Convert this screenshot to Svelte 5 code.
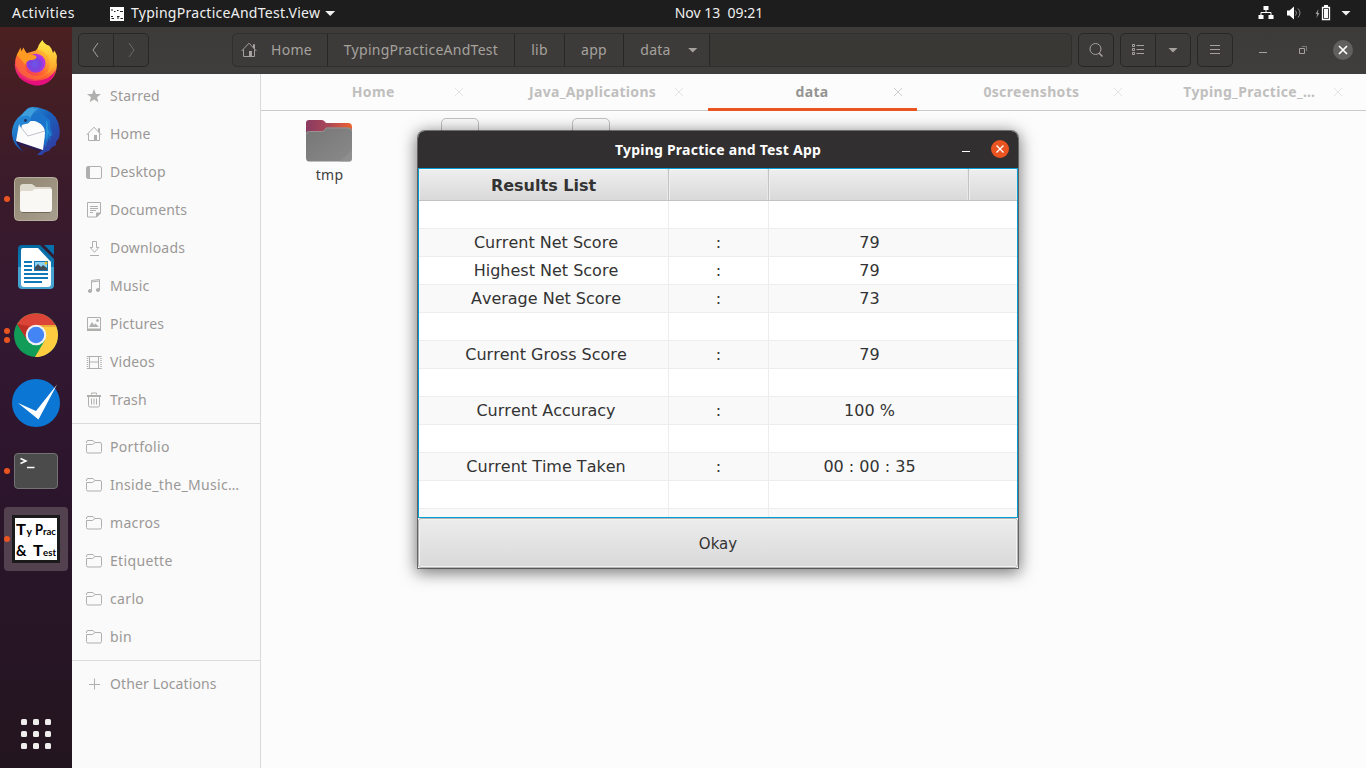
<script>
  const places = [
    { icon: 'star', label: 'Starred' },
    { icon: 'home', label: 'Home' },
    { icon: 'desktop', label: 'Desktop' },
    { icon: 'doc', label: 'Documents' },
    { icon: 'down', label: 'Downloads' },
    { icon: 'music', label: 'Music' },
    { icon: 'picture', label: 'Pictures' },
    { icon: 'video', label: 'Videos' },
    { icon: 'trash', label: 'Trash' }
  ];
  const bookmarks = ['Portfolio', 'Inside_the_Music…', 'macros', 'Etiquette', 'carlo', 'bin'];
  const tabs = ['Home', 'Java_Applications', 'data', '0screenshots', 'Typing_Practice_…'];
  const rows = [
    null,
    ['Current Net Score', '79'],
    ['Highest Net Score', '79'],
    ['Average Net Score', '73'],
    null,
    ['Current Gross Score', '79'],
    null,
    ['Current Accuracy', '100 %'],
    null,
    ['Current Time Taken', '00 : 00 : 35'],
    null,
    null
  ];
  const dock = [
    { id: 'firefox', dots: 0 },
    { id: 'thunderbird', dots: 0 },
    { id: 'files', dots: 1 },
    { id: 'writer', dots: 0 },
    { id: 'chrome', dots: 2 },
    { id: 'todo', dots: 0 },
    { id: 'terminal', dots: 1 },
    { id: 'typing', dots: 1, active: true }
  ];
</script>

{#snippet homeShape()}
  <path d="M.6 9 8 1.200 15.400 9M12.500 6V2.500h1V7M2.500 7.500v7h11v-7" fill="none" stroke="currentColor" />
  <path d="M8 9h3v5.500H8z" fill="currentColor" stroke="none" />
{/snippet}

{#snippet place(name)}
  <svg class="pi" viewBox="0 0 16 16" fill="none" stroke="currentColor">
    {#if name === 'star'}
      <path fill="currentColor" stroke="none" d="M8 1l1.900 4.900 5.100.1-4 3.300 1.400 5L8 11.500l-4.400 2.800 1.400-5L1 6l5.100-.1z" />
    {:else if name === 'home'}
      {@render homeShape()}
    {:else if name === 'desktop'}
      <rect x=".5" y="2.500" width="15" height="12" rx="1.500" /><path fill="currentColor" stroke="none" d="M1 3h3v11H1z" />
    {:else if name === 'doc'}
      <path d="M1.500.5h13v10.500l-4 4h-9zM4 4.500h8M4 6.500h8M4 8.500h6M4 10.500h3" /><path fill="currentColor" d="M10.500 15v-4h4z" />
    {:else if name === 'down'}
      <path d="M6.500 1.500h4v6h2.300L8.500 12.300 4.200 7.500h2.300zM4 15.500h9" />
    {:else if name === 'music'}
      <path d="M5.500 13V2.500l8-1V12M5.500 4l8-1" /><ellipse cx="4" cy="13" rx="1.600" ry="1.500" fill="currentColor" /><ellipse cx="12" cy="12" rx="1.600" ry="1.500" fill="currentColor" />
    {:else if name === 'picture'}
      <path d="M1.500 1.500h13v12.500h-13z" /><path fill="currentColor" stroke="none" d="M3 11l3-5 2 3 1.500-1.500L13 11zM1 12.500h14V15H1z" /><circle cx="11.500" cy="4.500" r="1" fill="currentColor" />
    {:else if name === 'video'}
      <path d="M3.500 2v12M12.500 2v12M3.500 8h9M1 2.500h14M1 14.500h14" /><path d="M1.500 2v13M15 2v13" stroke-dasharray="1 1" stroke-width="1.500" />
    {:else if name === 'trash'}
      <path d="M5.500 2.500v-1.500h5v1.500M2.500 5v8.500q0 1.500 1.500 1.500h8q1.500 0 1.500-1.500V5M5.500 6.500v6M8 6.500v6M10.500 6.500v6" /><path d="M1 4h14" stroke-width="2" />
    {:else if name === 'folder'}
      <path d="M.5 4V3Q.5 1.500 2 1.500h5L9 3.500h5q1.500 0 1.500 1.500v7.500q0 1.500-1.500 1.500H2Q.5 14 .5 12.500V5.500h6L9 3.500" />
    {:else}
      <path d="M8.500 2.500v11M3 8.500h11" />
    {/if}
  </svg>
{/snippet}

{#snippet dockIcon(id)}
  <svg class="di" viewBox="0 0 48 48">
    {#if id === 'firefox'}
      <defs>
        <linearGradient id="fx" x1="1" y1="0" x2=".2" y2="1"><stop offset="0" stop-color="#fff44f" /><stop offset=".35" stop-color="#ffb02e" /><stop offset=".65" stop-color="#ff5a36" /><stop offset="1" stop-color="#e31587" /></linearGradient>
        <linearGradient id="fy" x1=".6" y1="0" x2=".5" y2="1"><stop offset="0" stop-color="#fff14a" /><stop offset="1" stop-color="#ff9424" /></linearGradient>
        <radialGradient id="fp" cx=".45" cy=".55"><stop offset="0" stop-color="#6b57ea" /><stop offset=".6" stop-color="#7a42dc" /><stop offset="1" stop-color="#b833e1" /></radialGradient>
      </defs>
      <g transform="translate(.8 0) scale(.96 .95)">
        <path fill="url(#fx)" d="M4 18l4-7 1 3 2-4 3 5 10-3 7-10q3 9 8 11l4 4q3 5 3 10-1 20-21 21Q4 47 2 28q0-6 2-10z" />
        <path fill="url(#fy)" d="M31 1q-5 5-5 10 9 2 12 10 2 11-5 17 13-6 13-20-1-4-3-6l-1 3q-1-5-4-8-6-2-7-6z" />
        <circle cx="24" cy="25.500" r="10" fill="url(#fp)" />
        <path fill="#ff7a2a" d="M3 20l2-5 10 7-1 4-1 4q1 8 12 9 8-1 12-8 0 11-14 12Q8 41 3 28z" opacity=".6" />
        <path fill="#ff9b22" d="M4 17l4-8 1 4 2-4q2 5 5 7 7 0 9 3-2 4-7 3-4 1-5 5-6-8-9-10z" />
        <path fill="#e50e7d" d="M4 34q7 12 21 10 14-1 20-12-4 17-22 17Q9 46 4 34z" />
      </g>
    {:else if id === 'thunderbird'}
      <defs><linearGradient id="tb" x1="0" y1="0" x2="1" y2="1"><stop offset="0" stop-color="#34a7e6" /><stop offset=".45" stop-color="#1963bd" /><stop offset="1" stop-color="#36309a" /></linearGradient></defs>
      <path fill="url(#tb)" d="M16 1q6-2 12 0 14 3 18 14 3 9 1 16l-3 4 0 3-5 3-2 3-4 1-3 3q-2 1-5 0l5-5L6 36q1 4 6 9Q-1 38 0 24 1 14 10 7z" />
      <path fill="#291b52" d="M3 33l3 5q2 4 6 7-4-5-4-7l20 6 3-1z" />
      <path fill="#fcfcfd" d="M7 17 4 34l27 9 1-8 3-6-2-11-3-4-11 0z" /><path d="M7 18l9 11 17-5" fill="none" stroke="#aeb2ba" stroke-width=".8" />
      <path fill="#3e9fdc" d="M9 11q2-7 9-10l4-1-1 2 6-1q-8 5-9 12l-5 3z" />
      <path fill="#2487d5" d="M9 10q8-4 10 2-1 5-6 5l-3 1q-1 2 0 3-3-2-3-6z" /><circle cx="13.500" cy="13.500" r="1.400" fill="#20305a" />
      <path fill="#1c73cc" d="M18 13Q21 5 30 7l8 6q0 10 3 15l-3-1q0 6 1 7l-4-4-1 10q-2-2-2-5 1-6 1-10-1-10-15-12z" />
      <path fill="#2696d9" d="M34 13q2 1 2 9 2 6 4 7-3 1-4-4-1 8 0 11-3-5-2-13z" />
    {:else if id === 'files'}
      <defs><linearGradient id="fi" x1="0" y1="0" x2="1" y2="1"><stop stop-color="#8f8570" /><stop offset="1" stop-color="#a99f8e" /></linearGradient></defs>
      <rect x="2.500" y="2.500" width="43" height="43" rx="4" fill="url(#fi)" stroke="#b6ae9c" />
      <path fill="#dedacd" d="M8 12q0-3 3-3h9l4 3h13q3 0 3 3v10H8z" /><path fill="#f9f8f5" d="M8 18q0-2 2-2h10l3-2h15q2 0 2 2v18q0 3-3 3H11q-3 0-3-3z" /><path d="M10 37.500h28" stroke="#70685a" />
    {:else if id === 'writer'}
      <defs><linearGradient id="wr" x2="0" y2="1"><stop stop-color="#0369a3" /><stop offset=".5" stop-color="#1279b5" /><stop offset=".51" stop-color="#45a3d2" /></linearGradient></defs>
      <g transform="translate(0 1)">
        <path d="M10 1h18l14 14v26q0 4-4 4H10q-4 0-4-4V5q0-4 4-4z" fill="url(#wr)" /><path d="M11 4h15l13 14v22q0 3-3 3H12q-3 0-3-3V6q0-2 2-2z" fill="#fff" /><path d="M32 1h10v10z" fill="#0671ad" />
        <path d="M12 18h8M12 22h8M12 26h8M12 30h24M12 34h24M12 38h18" stroke="#1279b8" stroke-width="2" /><path fill="#1279b8" d="M22 17h14v10H22z" /><path fill="#8ad1f3" d="M23 18h12v8H23z" /><path fill="#424d59" d="M23 26v-3l3-3 3 3 2-2 4 3v2z" /><circle cx="34" cy="19" r="1.500" fill="#efbd28" />
      </g>
    {:else if id === 'chrome'}
      <circle cx="24" cy="24" r="22" fill="#119d58" />
      <path d="M24 24 5 13A22 22 0 0 1 43.500 14z" fill="#dc4437" /><path d="M24 14h19.600A22 22 0 0 1 23 46l10-17z" fill="#ffcd40" /><path d="M5 13l10 16-1-6 3-8z" fill="#be3025" /><path d="M24 14h19.500l.6 2L30 16z" fill="#eda83b" />
      <circle cx="24" cy="24" r="10.300" fill="#f2f2f2" /><circle cx="24" cy="24" r="8.200" fill="#4385f5" />
    {:else if id === 'todo'}
      <circle cx="24" cy="24" r="24" fill="#0c76d4" /><path fill="#fff" d="M6 24 24 32 45 5.500 26.500 40.500z" />
    {:else if id === 'terminal'}
      <rect x="2.500" y="6.500" width="43" height="35" rx="3.500" fill="#4b4b4b" stroke="#737373" /><path d="M8.500 11.500l5.500 2.500-5.500 2.500M15 20.500h7.500" fill="none" stroke="#fff" stroke-width="1.500" />
    {:else}
      <path fill="#1b1b1b" d="M0 0h48v48H0z" /><path fill="#fff" d="M3 3h42v42H3z" />
      <g class="hand">
        <text x="4" y="19.500" font-size="16" textLength="10" lengthAdjust="spacingAndGlyphs">T</text><text x="14.500" y="19.500" font-size="10" textLength="5.500" lengthAdjust="spacingAndGlyphs">y</text>
        <text x="23" y="19.500" font-size="16" textLength="8" lengthAdjust="spacingAndGlyphs">P</text><text x="31" y="19.500" font-size="9.500" textLength="13" lengthAdjust="spacingAndGlyphs">rac</text>
        <text x="4" y="40.500" font-size="16" textLength="10.500" lengthAdjust="spacingAndGlyphs">&amp;</text><text x="21" y="40.500" font-size="16" textLength="10" lengthAdjust="spacingAndGlyphs">T</text><text x="31" y="40.500" font-size="9.500" textLength="13" lengthAdjust="spacingAndGlyphs">est</text>
      </g>
    {/if}
  </svg>
{/snippet}

<div class="screen">
  <header class="topbar">
    <span class="act">Activities</span>
    <svg class="mini" viewBox="0 0 14 14"><path fill="#fff" d="M0 0h14v14H0z" /><path stroke="#222" d="M1 3h2M4 4.500h1.500M7 3.500h1.500M10 4.500h3M1 9.500h2M1.500 11.500h2.500M7 9.500h2.500M8 10v2M10.500 11.500h2.500" /></svg>
    <span class="appname">TypingPracticeAndTest.View</span><i class="tri"></i>
    <span class="clock">Nov 13&nbsp; 09:21</span>
    <span class="tray">
      <svg width="16" height="14" viewBox="0 0 16 14"><path fill="#fff" d="M5.500 0h5v4h-5zM.5 9h5v4h-5zM10.500 9h5v4h-5z" /><path d="M8 4v3M3 9V6.500h10V9" fill="none" stroke="#fff" /></svg>
      <svg width="16" height="14" viewBox="0 0 16 14"><path fill="#fff" d="M1 4.500h2.500L8 .5v13L3.500 9.500H1z" /><path d="M9.500 4.500q2 2.500 0 5M12 2.500q4 4.500 0 9" fill="none" stroke="#8b8b8b" /></svg>
      <svg width="16" height="16" viewBox="0 0 16 16"><path fill="#999" d="M3.500 4 .5 9h1.600L1.500 13l3-5H2.900z" /><path d="M7.500 2.500h7v12h-7z" fill="none" stroke="#fff" stroke-width="1.300" /><path fill="#fff" d="M9 0h4v2H9zM9 4h4v9H9z" /></svg>
      <i class="tri"></i>
    </span>
  </header>

  <div class="work">
    <nav class="dock">
      {#each dock as d}
        <div class="slot">
          <div class="tile" class:active={d.active}>{@render dockIcon(d.id)}</div>
          {#if d.dots}<span class="dots">{#each Array(d.dots) as _}<i></i>{/each}</span>{/if}
        </div>
      {/each}
      <div class="grid9">{#each Array(9) as _}<i></i>{/each}</div>
    </nav>

    <div class="files">
      <div class="toolbar">
        <div class="group"><span class="btn"><svg width="16" height="16"><path d="M10 1 5 8l5 7" /></svg></span><span class="btn dim"><svg width="16" height="16"><path d="M6 1l5 7-5 7" /></svg></span></div>
        <div class="path">
          <span class="seg s1"><svg width="16" height="16" viewBox="0 0 16 16">{@render homeShape()}</svg><span>Home</span></span>
          <span class="seg s2"><span>TypingPracticeAndTest</span></span>
          <span class="seg s3"><span>lib</span></span>
          <span class="seg s4"><span>app</span></span>
          <span class="seg s5"><span>data</span><i class="tri"></i></span>
        </div>
        <div class="group g1"><span class="btn"><svg width="16" height="16"><circle cx="7.500" cy="7" r="5.500" /><path d="M11 11l3.500 3.500" stroke-width="1.500" /></svg></span></div>
        <div class="group g2"><span class="btn"><svg width="16" height="16"><path d="M2.500 2.500h2v2h-2zM2.500 6.500h2v2h-2zM2.500 10.500h2v2h-2zM6.500 3.500H14M6.500 7.500H14M6.500 11.500H14" /></svg></span><span class="btn"><i class="tri"></i></span></div>
        <div class="group g3"><span class="btn"><svg width="16" height="16"><path d="M3 3.500h10M3 7.500h10M3 11.500h10" /></svg></span></div>
        <div class="wm">
          <svg width="16" height="16"><path d="M4 10.500h8" /></svg>
          <svg width="16" height="16"><path d="M4.500 6.500h5v5h-5z" /><path d="M7 4.500h4.500V9" opacity=".6" /></svg>
          <span class="wclose"><svg width="20" height="20"><path d="M6 6l8 8M14 6l-8 8" /></svg></span>
        </div>
      </div>

      <div class="body">
        <aside class="side">
          {#each places as p}
            <div class="item">{@render place(p.icon)}<span>{p.label}</span></div>
          {/each}
          <hr />
          {#each bookmarks as b}
            <div class="item mark">{@render place('folder')}<span>{b}</span></div>
          {/each}
          <hr />
          <div class="item last">{@render place('plus')}<span>Other Locations</span></div>
        </aside>
        <main class="content">
          <div class="tabs">
            {#each tabs as t, i}
              <div class="tab" class:on={i === 2}><span>{t}</span><svg width="10" height="10"><path d="M1 1l8 8M9 1l-8 8" /></svg></div>
            {/each}
          </div>
          <div class="icons">
            <div class="folder">
              <svg width="48" height="44" viewBox="0 0 48 44">
                <defs><linearGradient id="fo"><stop stop-color="#8b3a62" /><stop offset=".5" stop-color="#ab4857" /><stop offset="1" stop-color="#f0622e" /></linearGradient><linearGradient id="fg" x2="1" y2="1"><stop stop-color="#767676" /><stop offset="1" stop-color="#8a8a8a" /></linearGradient></defs>
                <path fill="url(#fo)" d="M1 14V4q0-3 3-3h13q2 0 4 3h22q4 0 4 4v10z" /><path fill="url(#fg)" d="M1 15q0-3 3-3h13q2 0 4-3.500h22q4 0 4 3v27q0 4-3 4H4q-3 0-3-4z" /><path d="M1.500 15q0-2.500 3-2.500h13q2 0 4-3.500h21q4 0 4 3" fill="none" stroke="#9b9190" /><path fill="#929292" d="M47 31v9q0 3-4 2.500h-8z" opacity=".7" />
              </svg>
              <span>tmp</span>
            </div>
            <div class="sheet a"></div>
            <div class="sheet b"></div>
          </div>
        </main>
      </div>
    </div>
  </div>

  <section class="dialog">
    <div class="title"><span>Typing Practice and Test App</span>
      <div class="tb"><i class="min"></i><span class="x"><svg width="18" height="18"><path d="M5.500 5.500l7 7M12.500 5.500l-7 7" /></svg></span></div>
    </div>
    <div class="table">
      <div class="tr head"><b>Results List</b><b></b><b></b><b></b></div>
      {#each rows as r, i}
        <div class="tr" class:odd={i % 2}><span>{r ? r[0] : ''}</span><span>{r ? ':' : ''}</span><span>{r ? r[1] : ''}</span><span></span></div>
      {/each}
    </div>
    <div class="okay">Okay</div>
  </section>
</div>

<style>
  :global(body) { margin: 0; overflow: hidden; }
  .screen { width: 1366px; height: 768px; position: relative; overflow: hidden; display: flex; flex-direction: column; font: 14px/20px "Noto Sans", sans-serif; background: #fcfcfc; }
  svg { display: block; flex: none; }
  .tri { display: block; width: 10px; height: 5px; background: currentColor; clip-path: polygon(0 0, 100% 0, 50% 100%); }
  .topbar { height: 27px; background: #1d1d1d; color: #f0f0f0; display: flex; position: relative; align-items: center; flex: none; }
  .act { width: 98px; padding-left: 12px; letter-spacing: .45px; }
  .mini { width: 14px; height: 14px; }
  .appname { margin-left: 7px; margin-right: 5px; letter-spacing: .27px; }
  .clock { position: absolute; left: 0; right: 0; text-align: center; margin-left: 72px; }
  .act, .appname, .clock { padding-bottom: 1px; }
  .tray { margin-left: auto; display: flex; align-items: center; gap: 12.500px; padding: 0 15px 1px 0; }
  .tray .tri { margin-left: -2px; }
  .work { flex: 1; display: flex; min-height: 0; }
  .dock { width: 72px; flex: none; background: linear-gradient(#4b2020 0, #3b1b2a 20%, #331831 40%, #2b152b 65%, #23151f 100%); display: flex; flex-direction: column; padding-top: 2px; box-sizing: border-box; }
  .slot { height: 68px; position: relative; display: flex; align-items: center; justify-content: center; }
  .tile { width: 64px; height: 64px; border-radius: 4px; display: grid; place-items: center; }
  .tile.active { background: #534150; }
  .di { width: 48px; height: 48px; }
  .hand { font-family: Lato, sans-serif; font-weight: 700; }
  .dots { position: absolute; left: 4px; top: 0; bottom: 0; display: flex; flex-direction: column; justify-content: center; gap: 3px; }
  .dots i { width: 6px; height: 6px; border-radius: 50%; background: #ea5420; }
  .grid9 { margin: auto auto 19px; display: grid; grid-template-columns: repeat(3, 6px); gap: 6px; }
  .grid9 i { height: 6px; border-radius: 1.500px; background: #eeeeec; }
  .files { flex: 1; min-width: 0; display: flex; flex-direction: column; }
  .toolbar { height: 47px; box-sizing: border-box; background: linear-gradient(#3d3b39, #403e3c); display: flex; align-items: center; padding: 0 13px 1px 6px; color: #a5a29e; }
  .toolbar svg { fill: none; stroke: currentColor; }
  .group { display: flex; height: 34px; box-sizing: border-box; border: 1px solid #282726; border-radius: 5px; background: #3c3b39; }
  .btn { width: 34px; display: grid; place-items: center; }
  .btn + .btn { border-left: 1px solid #282726; }
  .dim { color: #6d6b69; }
  .path { margin-left: 83px; width: 840px; height: 34px; box-sizing: border-box; border: 1px solid #302f2d; border-radius: 5px; display: flex; background: #393835; letter-spacing: .27px; }
  .seg { border-right: 1px solid #282726; box-sizing: border-box; display: flex; align-items: center; justify-content: center; background: #3d3b39; }
  .s1 { width: 95px; gap: 14px; border-radius: 5px 0 0 5px; padding-right: 7px; }
  .s2 { width: 187px; }
  .s3 { width: 50px; }
  .s4 { width: 59px; }
  .s5 { width: 86px; gap: 17px; padding-left: 5px; }
  .g1, .g2, .g3 { margin-left: 6px; }
  .wm { margin-left: auto; display: flex; align-items: center; gap: 22px; }
  .wm > :first-child { margin-right: 2px; }
  .wclose { width: 20px; height: 20px; border-radius: 50%; background: #62605e; color: #fff; }
  .wclose svg { stroke-width: 1.700; }
  .body { flex: 1; display: flex; min-height: 0; }
  .side { width: 188px; flex: none; background: #fafafa; border-right: 1px solid #dadada; padding-top: 3px; color: #9a9896; letter-spacing: .2px; }
  .item { height: 38px; display: flex; align-items: center; gap: 8px; padding-left: 14px; white-space: nowrap; }
  .mark { letter-spacing: .34px; }
  .last { letter-spacing: .12px; }
  .pi { width: 16px; height: 16px; color: #b0afae; }
  hr { border: 0; height: 1px; background: #dadada; margin: 4px 0; }
  .content { flex: 1; min-width: 0; }
  .tabs { height: 36px; border-bottom: 1px solid #cdcbc9; display: flex; gap: 10px; padding: 0 10px 0 8px; font-weight: 700; color: #c0bfbe; letter-spacing: .33px; }
  .tab { flex: 1 1 0; min-width: 0; display: grid; grid-template-columns: 37px 1fr 38px; align-items: center; justify-items: center; white-space: nowrap; height: 37px; box-sizing: border-box; padding-top: 2px; border-bottom: 3px solid transparent; }
  .tab span { grid-column: 2; }
  .tab:last-child { grid-template-columns: 33px 1fr 37px; }
  .tab svg { fill: none; stroke: #e4e3e2; }
  .tab.on { color: #969492; border-color: #e95420; }
  .tab.on svg { stroke: #cfcecd; }
  .icons { display: flex; align-items: flex-start; padding: 8px 0 0 44px; }
  .folder { width: 48px; display: flex; flex-direction: column; align-items: center; gap: 2px; color: #403e3d; letter-spacing: .3px; }
  .folder span { padding-left: 1px; }
  .sheet { width: 36px; height: 46px; border: 1px solid #c3c1bf; border-radius: 5px; background: #fafafa; margin-top: -1px; }
  .a { margin-left: 88px; }
  .b { margin-left: 93px; }
  .dialog { position: absolute; left: 418px; top: 131px; width: 600px; height: 437px; border-radius: 7px 7px 0 0; background: #fff; box-shadow: 0 0 0 1px #00000070, 0 3px 16px 2px #00000085; display: flex; flex-direction: column; font: 16px/20px "DejaVu Sans", sans-serif; color: #333; }
  .title { height: 37px; flex: none; background: #322f30; border-radius: 7px 7px 0 0; color: #fff; font: 700 14px/20px "Noto Sans", sans-serif; letter-spacing: .23px; display: grid; grid-template-columns: 60px 1fr 60px; align-items: center; }
  .title > span { grid-column: 2; text-align: center; }
  .tb { display: flex; align-items: center; gap: 21px; }
  .min { width: 8px; height: 1px; background: #fff; margin: 3px 0 0 4px; }
  .x { width: 18px; height: 18px; border-radius: 50%; background: #e95420; margin-top: -1px; }
  .x svg { stroke: #fff; stroke-width: 1.400; }
  .table { height: 350px; flex: none; box-sizing: border-box; border: 1px solid #039ed3; overflow: hidden; }
  .tr { display: grid; grid-template-columns: 250px 100px 200px 48px; height: 28px; box-sizing: border-box; border-bottom: 1px solid #ededed; text-align: center; font-kerning: none; }
  .tr > * { border-right: 1px solid #ededed; line-height: 28px; height: 27px; }
  .tr > :first-child { padding-left: 5px; }
  .tr > :nth-child(3) { border-color: transparent; padding-left: 2px; }
  .tr > :last-child { border: 0; }
  .odd { background: #f9f9f9; }
  .head { height: 32px; background: linear-gradient(#efefef, #d9d9d9); border-color: #c3c3c3; box-shadow: inset 0 1px #fafafa; }
  .head > *, .head > :nth-child(3), .head > :first-child { border-color: #c3c3c3; line-height: 33px; height: 31px; padding: 0; box-shadow: inset 1px 0 #efefef, inset -1px 0 #e8e8e8; }
  .okay { flex: 1; min-height: 0; box-sizing: border-box; border: 1px solid #b4b4b4; background: linear-gradient(#ececec, #d9d9d9); box-shadow: inset 0 0 0 1px #f3f3f3; border-radius: 3px; text-align: center; font-size: 15px; line-height: 51px; }
</style>
